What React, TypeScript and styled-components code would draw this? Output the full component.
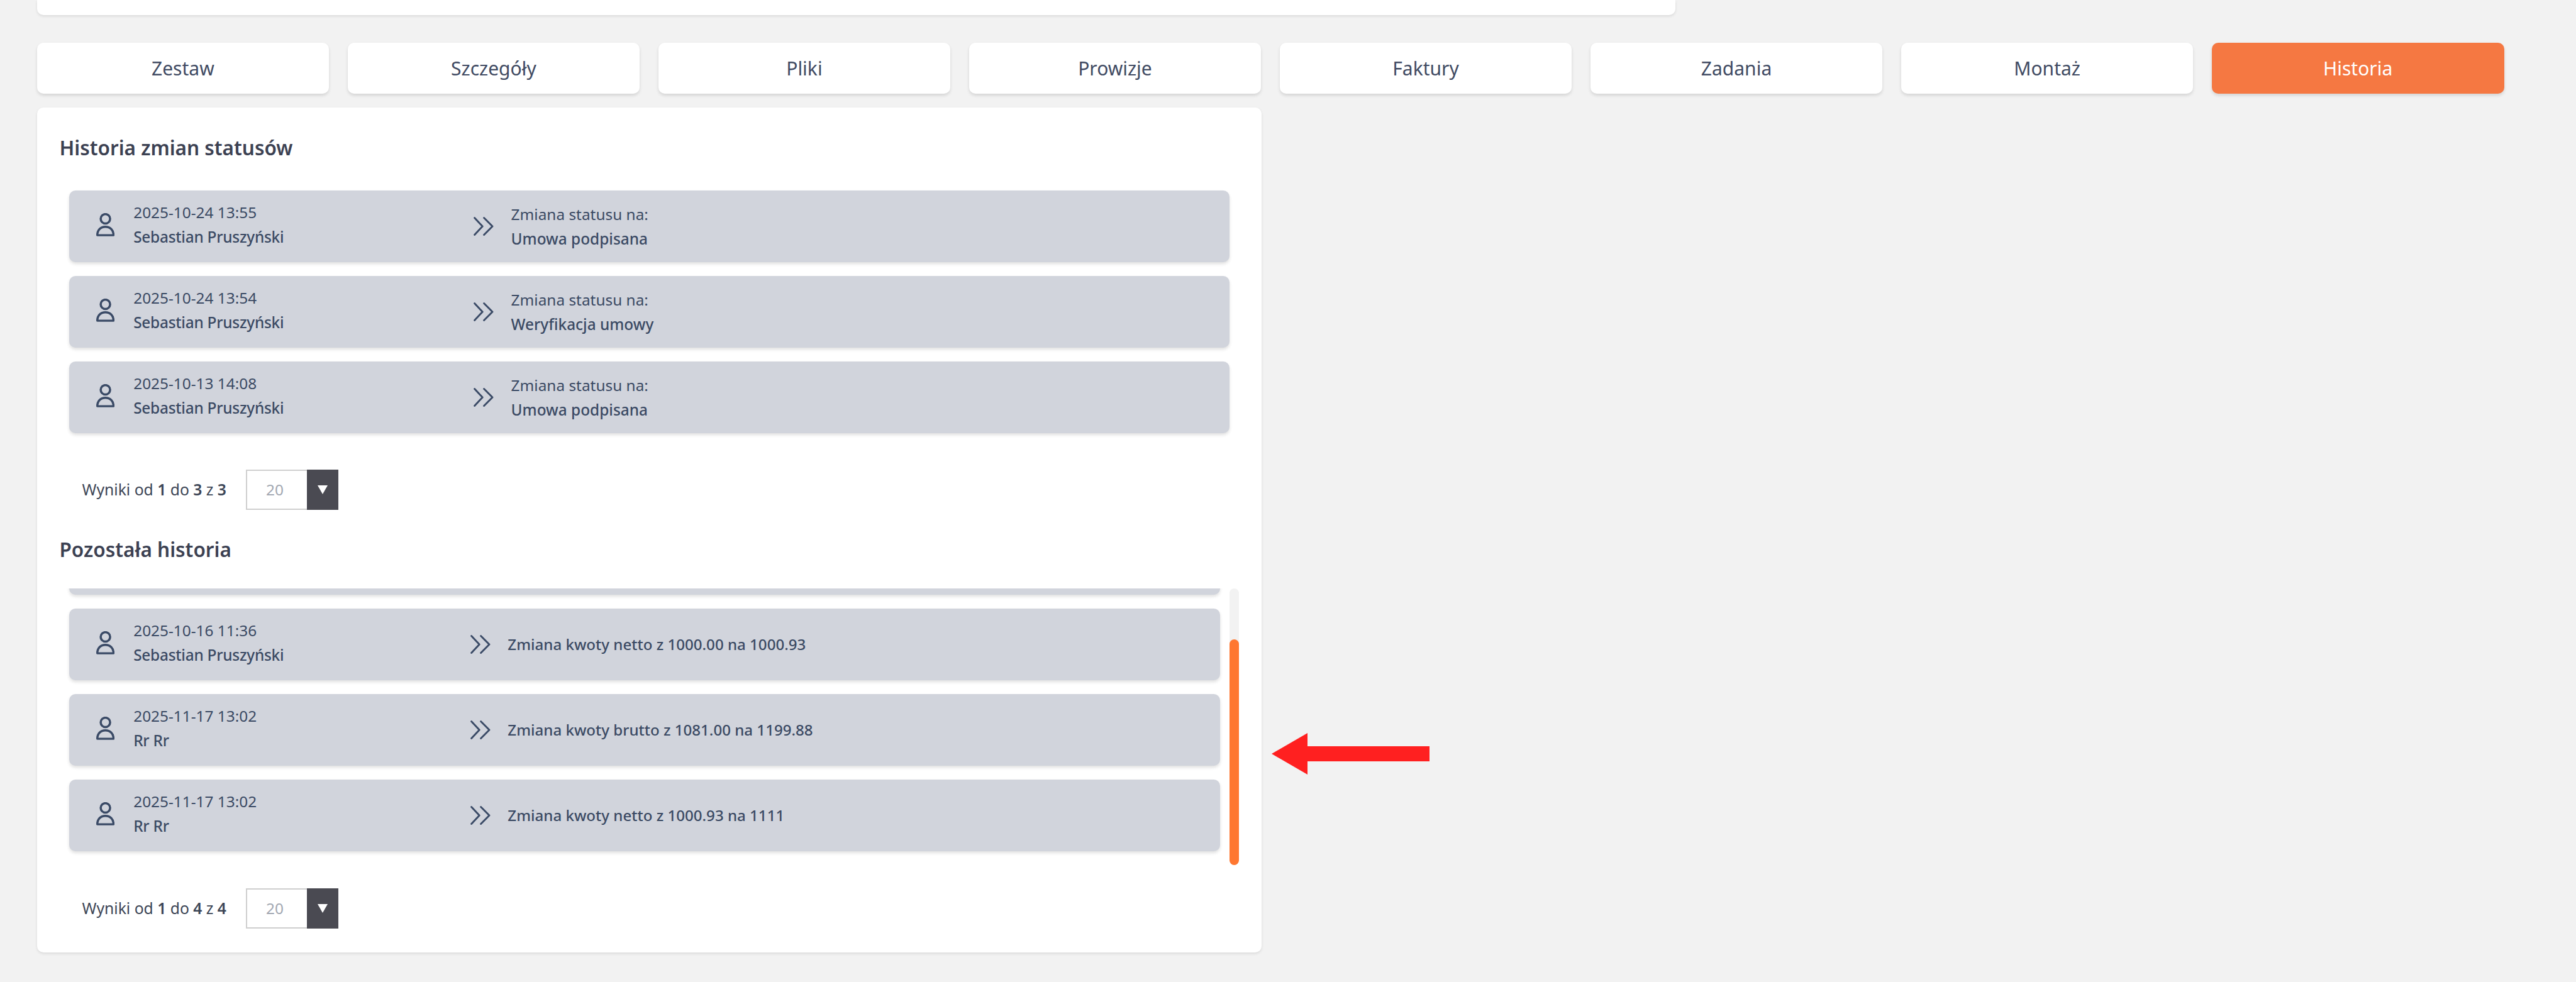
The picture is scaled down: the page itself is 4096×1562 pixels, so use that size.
import React, { useLayoutEffect, useRef } from "react";
import styled, { createGlobalStyle } from "styled-components";

const Global = createGlobalStyle`
  html, body { margin: 0; padding: 0; background: #f2f2f2; overflow: hidden; }
  * { box-sizing: border-box; }
`;

const Page = styled.div`
  position: relative;
  width: 4096px;
  height: 1562px;
  padding: 0 0 0 58.5px;
  background: #f2f2f2;
  font-family: "Noto Sans", "Open Sans", sans-serif;
  color: #3b4a64;
  overflow: hidden;
`;

const TopCard = styled.div`
  width: 2605px;
  height: 24px;
  background: #fff;
  border-radius: 0 0 10px 10px;
  box-shadow: 0 2px 4px rgba(0, 0, 0, 0.1);
`;

const Tabs = styled.nav`
  display: grid;
  grid-template-columns: repeat(8, 1fr);
  column-gap: 29.3px;
  width: 3923px;
  margin-top: 44px;
`;

const Tab = styled.div<{ $active?: boolean }>`
  height: 80.6px;
  padding-top: 1px;
  display: flex;
  align-items: center;
  justify-content: center;
  border-radius: 10px;
  font-size: 30px;
  background: ${(p) => (p.$active ? "#f57842" : "#fff")};
  color: ${(p) => (p.$active ? "#fff" : "#414b63")};
  box-shadow: 0 3px 5px rgba(0, 0, 0, 0.12);
`;

const Card = styled.section`
  width: 1947px;
  height: 1344.3px;
  margin-top: 22px;
  padding: 42px 36px 0;
  background: #fff;
  border-radius: 10px;
  box-shadow: 0 2px 4px rgba(0, 0, 0, 0.1);
`;

const Title = styled.h2<{ $top?: number }>`
  margin: ${(p) => p.$top ?? 0}px 0 0;
  height: 44px;
  line-height: 44px;
  font-size: 31.5px;
  font-weight: 600;
  color: #3c4152;
`;

const List = styled.div`
  display: flex;
  flex-direction: column;
  gap: 22px;
  margin-top: 46px;
  padding: 0 15px;
`;

const ScrollBox = styled.div`
  display: flex;
  height: 440px;
  margin-top: 39.5px;
`;

const Viewport = styled.div`
  flex: 1;
  min-width: 0;
  display: flex;
  flex-direction: column;
  gap: 22px;
  padding: 0 15px 22px;
  overflow: hidden;
`;

const ScrollTrack = styled.div`
  flex: 0 0 15px;
  display: flex;
  flex-direction: column;
  justify-content: flex-end;
  background: #f2f2f2;
  border-radius: 8px;
`;

const ScrollThumb = styled.div`
  height: 359px;
  background: #ff7730;
  border-radius: 8px;
`;

const Row = styled.article`
  flex: 0 0 114px;
  display: flex;
  align-items: center;
  height: 114px;
  background: #d1d4dc;
  border-radius: 10px;
  box-shadow: 0 3px 5px rgba(0, 0, 0, 0.12);
`;

const Who = styled.div`
  flex: 0 0 34.9%;
  display: flex;
  align-items: center;
  gap: 30px;
  padding: 0 0 4px 43.5px;
`;

const Stack = styled.div`
  display: flex;
  flex-direction: column;
  font-size: 24.4px;
  line-height: 38.7px;
  white-space: nowrap;
`;

const StatusStack = styled(Stack)`
  padding-top: 2px;
`;

const Strong = styled.div`
  font-weight: 500;
`;

const Name = styled(Strong)`
  letter-spacing: -0.25px;
`;

const ChangeText = styled.div`
  font-size: 24.1px;
  font-weight: 500;
  white-space: nowrap;
`;

const Change = styled.div`
  display: flex;
  align-items: center;
  gap: 27.6px;
`;

const Pager = styled.div<{ $top: number }>`
  display: flex;
  align-items: center;
  gap: 31px;
  margin: ${(p) => p.$top}px 0 0 36px;
  font-size: 24.7px;
  color: #3d4656;
  b { font-weight: 600; }
`;

const Select = styled.div`
  display: flex;
  width: 147px;
  height: 64.5px;
  border: solid #cfcfcf;
  border-width: 2px 0 2px 2px;
`;

const SelectValue = styled.div`
  flex: 1;
  padding-left: 30px;
  display: flex;
  align-items: center;
  color: #a3a8b2;
  font-size: 24.4px;
`;

const SelectButton = styled.div`
  flex: 0 0 50px;
  margin: -2px 0;
  background: #4a4a52;
  display: flex;
  align-items: center;
  justify-content: center;
`;

const Pointer = styled.svg`
  position: absolute;
  left: 2022px;
  top: 1166px;
`;

const UserIcon = () => (
  <svg width="29.2" height="37.1" viewBox="0 0 37 47" fill="none" stroke="#3a4a66" strokeWidth="4.4" strokeLinejoin="round">
    <circle cx="18.5" cy="11.5" r="9.5" />
    <path d="M2.2 44.5C2.2 34 9 27.5 18.5 27.5S34.8 34 34.8 44.5Z" />
  </svg>
);

const Chevrons = () => (
  <svg width="31.6" height="30" viewBox="0 0 40 38" fill="none" stroke="#3a4a66" strokeWidth="3.6" strokeLinecap="round" strokeLinejoin="round">
    <path d="M2 2L18 19L2 36" />
    <path d="M21 2L38 19L21 36" />
  </svg>
);

const Caret = () => (
  <svg width="16" height="16" viewBox="0 0 16 16">
    <path d="M0 1H16L8 15Z" fill="#fff" />
  </svg>
);

const tabs = ["Zestaw", "Szczegóły", "Pliki", "Prowizje", "Faktury", "Zadania", "Montaż", "Historia"];

const statuses = [
  ["2025-10-24 13:55", "Sebastian Pruszyński", "Umowa podpisana"],
  ["2025-10-24 13:54", "Sebastian Pruszyński", "Weryfikacja umowy"],
  ["2025-10-13 14:08", "Sebastian Pruszyński", "Umowa podpisana"],
];

const others = [
  ["2025-10-16 11:36", "Sebastian Pruszyński", "Zmiana kwoty netto z 1000.00 na 1000.93"],
  ["2025-11-17 13:02", "Rr Rr", "Zmiana kwoty brutto z 1081.00 na 1199.88"],
  ["2025-11-17 13:02", "Rr Rr", "Zmiana kwoty netto z 1000.93 na 1111"],
];

const Person = ({ date, name }: { date: string; name: string }) => (
  <Who>
    <UserIcon />
    <Stack>
      <div>{date}</div>
      <Name>{name}</Name>
    </Stack>
  </Who>
);

const Results = ({ top, to }: { top: number; to: number }) => (
  <Pager $top={top}>
    <span>
      Wyniki od <b>1</b> do <b>{to}</b> z <b>{to}</b>
    </span>
    <Select>
      <SelectValue>20</SelectValue>
      <SelectButton>
        <Caret />
      </SelectButton>
    </Select>
  </Pager>
);

export default function App() {
  const viewport = useRef<HTMLDivElement>(null);
  useLayoutEffect(() => {
    if (viewport.current) viewport.current.scrollTop = 9999;
  }, []);

  return (
    <Page>
      <Global />
      <TopCard />
      <Tabs>
        {tabs.map((t) => (
          <Tab key={t} $active={t === "Historia"}>
            {t}
          </Tab>
        ))}
      </Tabs>
      <Card>
        <Title>Historia zmian statusów</Title>
        <List>
          {statuses.map(([date, name, status]) => (
            <Row key={date}>
              <Person date={date} name={name} />
              <Change>
                <Chevrons />
                <StatusStack>
                  <div>Zmiana statusu na:</div>
                  <Strong>{status}</Strong>
                </StatusStack>
              </Change>
            </Row>
          ))}
        </List>
        <Results top={58} to={3} />
        <Title $top={41}>Pozostała historia</Title>
        <ScrollBox>
          <Viewport ref={viewport}>
            <Row />
            {others.map(([date, name, text]) => (
              <Row key={text}>
                <Person date={date} name={name} />
                <Change>
                  <Chevrons />
                  <ChangeText>{text}</ChangeText>
                </Change>
              </Row>
            ))}
          </Viewport>
          <ScrollTrack>
            <ScrollThumb />
          </ScrollTrack>
        </ScrollBox>
        <Results top={37} to={4} />
      </Card>
      <Pointer width="251" height="66" viewBox="0 0 251 66">
        <path d="M0 33L57 0V21H251V45H57V66Z" fill="#ff2020" />
      </Pointer>
    </Page>
  );
}
